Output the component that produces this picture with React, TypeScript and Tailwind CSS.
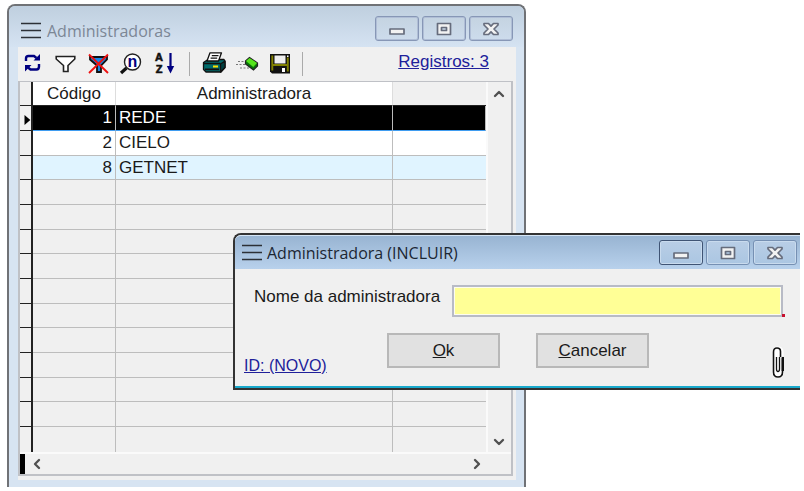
import React from 'react';
import { ChevronDown, ChevronLeft, ChevronRight, ChevronUp } from 'lucide-react';

const ROWS = [
  { code: 1, name: 'REDE' },
  { code: 2, name: 'CIELO' },
  { code: 8, name: 'GETNET' },
];

// The grid always shows 14 lines, filled or not
const LINES = Array.from({ length: 14 }, (_, i) => ROWS[i]);

const ICONS = [
  {
    label: 'Atualizar',
    icon: (
      <g fill="none" stroke="#000080" strokeWidth="2.4">
        <path d="M6 9V6.5Q6 4 8.5 4H14L16.5 6" />
        <path d="M19 12V14.5Q19 17.5 16.5 17.5H10.5L8 15.5" />
        <path d="M20 2V8.5H13.5ZM5 19.5V13H11.5Z" fill="#000080" stroke="none" />
      </g>
    ),
  },
  {
    label: 'Filtrar',
    icon: (
      <path
        d="M3.2 4.5H21.8V7L15 13.5V19.5H10.5V13.5L3.2 7Z"
        fill="#fff"
        stroke="#222"
        strokeWidth="1.6"
      />
    ),
  },
  {
    label: 'Remover filtro',
    icon: (
      <g>
        <path d="M4 5H21V7.5L15 13.5V20H11V13.5L4 7.5Z" fill="#1687e8" stroke="#111" strokeWidth="1.8" />
        <path d="M3 2.5L22 21M22 2.5L3 21" stroke="#ee1111" strokeWidth="1.9" />
      </g>
    ),
  },
  {
    label: 'Procurar',
    icon: (
      <g>
        <path d="M7.5 16L2 21" stroke="#111" strokeWidth="3.2" />
        <circle cx="13.5" cy="10" r="8" fill="#fff" stroke="#222" strokeWidth="1.4" />
        <text x="13.5" y="15" textAnchor="middle" fontSize="16" fontWeight="bold" fill="#000080">
          n
        </text>
      </g>
    ),
  },
  {
    label: 'Ordenar',
    icon: (
      <g>
        <g textAnchor="middle" fontSize="11" fontWeight="bold" fill="#111" stroke="#111" strokeWidth="0.6">
          <text x="7" y="9">
            A
          </text>
          <text x="7" y="21">
            Z
          </text>
        </g>
        <path d="M18.5 1V15" stroke="#000080" strokeWidth="2.2" />
        <path d="M14.8 14H22.2L18.5 21.5Z" fill="#000080" />
      </g>
    ),
  },
];

const FILE_ICONS = [
  {
    label: 'Imprimir',
    icon: (
      <g stroke="#111" strokeWidth="1.3" strokeLinejoin="round">
        <path d="M1.5 10.5L6 7.5H22L23 9.5V15.5L19 20H4L1.5 17.5Z" fill="#006b6b" />
        <path d="M18.5 12L23 9V15.5L18.5 20Z" fill="#003f40" />
        <path d="M8 0.8H19.5L16.5 9H5Z" fill="#fff" />
        <path d="M9.8 3.6H16.5M8.6 6.2H15.2" />
        <path d="M2 11.5H18.5M3 17.3H17" strokeWidth="1.7" />
        <path d="M11 14.5H16" stroke="#ffe000" strokeWidth="2" />
      </g>
    ),
  },
  {
    label: 'Limpar',
    icon: (
      <g>
        <path d="M10.5 9L14.5 5.5L22.5 11V14L18.5 18L10.5 12Z" fill="#087508" stroke="#222" strokeWidth="1.2" />
        <path d="M11 9L14.5 6L22 11L18.3 15Z" fill="#55e51c" />
        <path d="M3 9.5H9M1 12.5H10M5 16H14" stroke="#777" strokeWidth="1.2" strokeDasharray="2 1.5" />
      </g>
    ),
  },
  {
    label: 'Salvar',
    icon: (
      <g>
        <path d="M2 2H22V21.5H4L2 19.5Z" fill="#111" />
        <path d="M4.3 3.5V18.5M19.8 5.5V19.5M5 13H19" stroke="#808000" strokeWidth="1.9" />
        <path d="M6.5 3.5H17.5V11.5H6.5Z" fill="#eee" />
        <path d="M14 16H17V20H14Z" fill="#fff" />
        <path d="M19 3.5H20.5V5H19Z" fill="#fff" />
      </g>
    ),
  },
];

function ToolButton({ label, children }: { label: string; children: React.ReactNode }) {
  return (
    <button type="button" aria-label={label} title={label} className="size-6 shrink-0">
      <svg viewBox="0 0 24 24" className="size-6">
        {children}
      </svg>
    </button>
  );
}

function MenuLines() {
  return (
    <svg viewBox="0 0 20 20" className="h-5 w-5 shrink-0" stroke="#2c3036" strokeWidth="1.7">
      <path d="M0 2.5H20M0 9.5H20M0 16.5H20" />
    </svg>
  );
}

function WindowButtons({ active }: { active?: boolean }) {
  const glyphs = [
    { label: 'Minimizar', d: 'M5 10H19V15H5Z' },
    { label: 'Maximizar', d: 'M5.5 4.5H18.5V15.5H5.5ZM9.5 8.5V11.5H14.5V8.5Z' },
    {
      label: 'Fechar',
      d: 'M5 4.5H9.5L12 7.2L14.5 4.5H19V6L15 10L19 14V15.5H14.5L12 12.8L9.5 15.5H5V14L9 10L5 6Z',
    },
  ];
  return (
    <div className="flex shrink-0 gap-[3px]">
      {glyphs.map((g) => (
        <button
          key={g.label}
          type="button"
          aria-label={g.label}
          className={`flex h-[25px] w-11 items-center justify-center rounded-[3px] border bg-linear-to-b ${
            active
              ? 'border-[#7690b3] from-[#b9cee6] to-[#abc6e2] inset-ring inset-ring-[#c9dbee] first:border-[#3f5474]'
              : 'border-[#8797b6] from-[#c4d3e1] to-[#cddcec] inset-ring inset-ring-[#b0bed6]'
          }`}
        >
          <svg viewBox="0 0 24 20" className="h-5 w-6">
            <path
              d={g.d}
              fill="#f2f2f2"
              fillRule="evenodd"
              stroke="#666c7c"
              strokeWidth="1.7"
              strokeLinejoin="round"
            />
          </svg>
        </button>
      ))}
    </div>
  );
}

function RecordsTable() {
  return (
    <table className="w-full table-fixed border-separate border-spacing-0">
      <colgroup>
        <col className="w-[13px]" />
        <col className="w-[83px]" />
        <col className="w-[277px]" />
        <col />
      </colgroup>
      <thead>
        <tr className="h-6 leading-5">
          <th className="border-r-2 border-b border-[#222] p-0" />
          <th className="border-r border-b border-r-[#ddd] border-b-[#222] bg-white p-0 font-normal">Código</th>
          <th className="border-r border-b border-r-[#ddd] border-b-[#222] bg-white p-0 font-normal">
            Administradora
          </th>
          <th className="border-b border-[#222] p-0" />
        </tr>
      </thead>
      <tbody>
        {LINES.map((row, i) => {
          const selected = i === 0;
          const tone = selected
            ? 'border-r-[#bbb] border-b-[#3f9cf0] bg-black text-white'
            : i === 1
              ? 'border-[#bdbdbd] bg-white'
              : i === 2
                ? 'border-[#bdbdbd] bg-[#e0f4ff]'
                : 'border-[#bdbdbd]';
          const last = i === LINES.length - 1 ? '' : 'border-b';
          return (
            <tr key={i} className="h-[25px] leading-5 nth-[3n]:h-6">
              <td className={`border-r-2 border-[#222] p-0 ${last}`}>
                {selected && (
                  <svg viewBox="0 0 12 12" className="mt-1 ml-0.5 h-3 w-[10px]">
                    <path d="M3 0L10 6L3 12Z" fill="#000" />
                  </svg>
                )}
              </td>
              <td className={`border-r p-0 pr-[3px] text-right ${last} ${tone}`}>{row?.code}</td>
              <td className={`border-r p-0 pl-[3px] ${last} ${tone}`}>{row?.name}</td>
              <td className={`p-0 ${last} ${tone} ${selected ? 'border-r border-r-[#3f9cf0]' : ''}`} />
            </tr>
          );
        })}
      </tbody>
    </table>
  );
}

function ListWindow() {
  return (
    <section className="mr-[278px] ml-[7px] rounded-t-lg border-2 border-b-0 border-[#707276] bg-[#d7e4f2]">
      <header className="flex h-[41px] items-center justify-between rounded-t-md bg-linear-to-b from-[#bfcfdf] to-[#d5e3f2] pr-[11px] pl-3">
        <h1 className="flex items-center gap-[6px] pt-2 font-['Open_Sans',sans-serif] text-base text-[#7c8796]">
          <MenuLines />
          Administradoras
        </h1>
        <div className="pt-1">
          <WindowButtons />
        </div>
      </header>
      <div className="mr-2 ml-[9px] bg-[#f0f0f0] pb-1">
        <div className="flex h-[34px] items-center pr-[27px] pl-0.5">
          <div className="flex gap-[9px]">
            {ICONS.map((t) => (
              <ToolButton key={t.label} label={t.label}>
                {t.icon}
              </ToolButton>
            ))}
          </div>
          <div className="mr-3 ml-[13px] h-6 w-px bg-[#aaa]" />
          <div className="flex gap-[9px]">
            {FILE_ICONS.map((t) => (
              <ToolButton key={t.label} label={t.label}>
                {t.icon}
              </ToolButton>
            ))}
          </div>
          <div className="ml-[10px] h-6 w-px bg-[#aaa]" />
          <a href="#registros" className="ml-auto pb-1 leading-5 text-[#20209a] underline">
            Registros: 3
          </a>
        </div>
        <div className="mr-[3px] border-2 border-t border-[#bfc1c6]">
          <div className="flex">
            <div className="min-w-0 flex-1">
              <RecordsTable />
            </div>
            <div className="flex w-[25px] shrink-0 flex-col items-center justify-between border-l-2 border-[#fafafa] pr-0.5 text-[#505050]">
              <button type="button" aria-label="Rolar para cima" className="pt-1">
                <ChevronUp className="size-4" strokeWidth={3.5} />
              </button>
              <button type="button" aria-label="Rolar para baixo" className="pb-0.5">
                <ChevronDown className="size-4" strokeWidth={3.5} />
              </button>
            </div>
          </div>
          <div className="flex h-[22px] items-center border-t-2 border-[#fafafa] pr-[26px] text-[#505050]">
            <div className="h-full w-[5px] bg-black" />
            <button type="button" aria-label="Rolar para a esquerda" className="ml-1">
              <ChevronLeft className="size-4" strokeWidth={3.5} />
            </button>
            <button type="button" aria-label="Rolar para a direita" className="ml-auto">
              <ChevronRight className="size-4" strokeWidth={3.5} />
            </button>
          </div>
        </div>
      </div>
      <div className="h-[7px]" />
    </section>
  );
}

function IncludeDialog() {
  return (
    <section
      role="dialog"
      aria-labelledby="dialog-title"
      className="absolute top-[233px] right-1 left-[233px] rounded-tl-lg border-t-2 border-b-2 border-l-2 border-[#333] bg-[#f0f0f0]"
    >
      <header className="flex h-[34px] items-center justify-between rounded-tl-md border-t border-[#d5e5f5] bg-linear-to-b from-[#98b4d2] to-[#b8d1ec] pr-[3px] pl-[7px]">
        <h2
          id="dialog-title"
          className="flex items-center gap-[5px] font-['Open_Sans',sans-serif] text-base text-[#1c2733]"
        >
          <MenuLines />
          Administradora (INCLUIR)
        </h2>
        <WindowButtons active />
      </header>
      <form className="border-b-2 border-[#18a9cc] pr-[15px] pb-1.5 pl-[9px]" onSubmit={(e) => e.preventDefault()}>
        <div className="relative flex items-start gap-2 pt-4 pr-0.5 pl-[10px]">
          <label htmlFor="nome" className="w-[190px] shrink-0 pt-0.5 leading-5 whitespace-nowrap">
            Nome da administradora
          </label>
          <input
            id="nome"
            className="h-8 min-w-0 flex-1 border-2 border-[#b8bbc6] bg-[#ffff96] px-1 outline-1 -outline-offset-3 outline-[#fcfcf0]"
          />
          <span className="absolute right-0 bottom-0 size-[3px] bg-[#c8102e]" />
        </div>
        <div className="flex items-end justify-between pt-4">
          <a href="#id" className="w-[143px] pb-1 text-base leading-5 text-[#20209a] underline">
            ID: (NOVO)
          </a>
          <div className="mb-3 flex flex-1 gap-9">
            <button type="submit" className="h-[35px] w-[113px] border-2 border-[#b8b8b8] bg-[#e1e1e1]">
              <u>O</u>k
            </button>
            <button type="button" className="h-[35px] w-[113px] border-2 border-[#b8b8b8] bg-[#e1e1e1]">
              <u>C</u>ancelar
            </button>
          </div>
          <button type="button" aria-label="Anexos">
            <svg viewBox="0 0 14 34" className="block h-[34px] w-[14px]" fill="none" stroke="#111" strokeWidth="1.6">
              <path
                d="M11 10V6Q11 2 7 2Q3 2 3 6V26Q3 30.5 7 30.5Q11 30.5 11 26V12"
                fill="#fff"
                stroke="#fff"
                strokeWidth="3"
              />
              <path d="M9.5 11V5.5Q9.5 2 6 2Q2.5 2 2.5 6V26Q2.5 31 7 31Q11.5 31 11.5 26V12" />
              <path d="M11.8 11V25" strokeWidth="2.4" />
              <path d="M5.5 11V23Q5.5 25.5 7 25.5Q8.5 25.5 8.5 23V11" strokeWidth="1.3" />
            </svg>
          </button>
        </div>
      </form>
    </section>
  );
}

export default function App() {
  return (
    <main className="relative min-h-screen bg-white pt-[4px] font-['Liberation_Sans',Arial,sans-serif] text-[17px] text-[#1a1a1a]">
      <ListWindow />
      <IncludeDialog />
    </main>
  );
}
